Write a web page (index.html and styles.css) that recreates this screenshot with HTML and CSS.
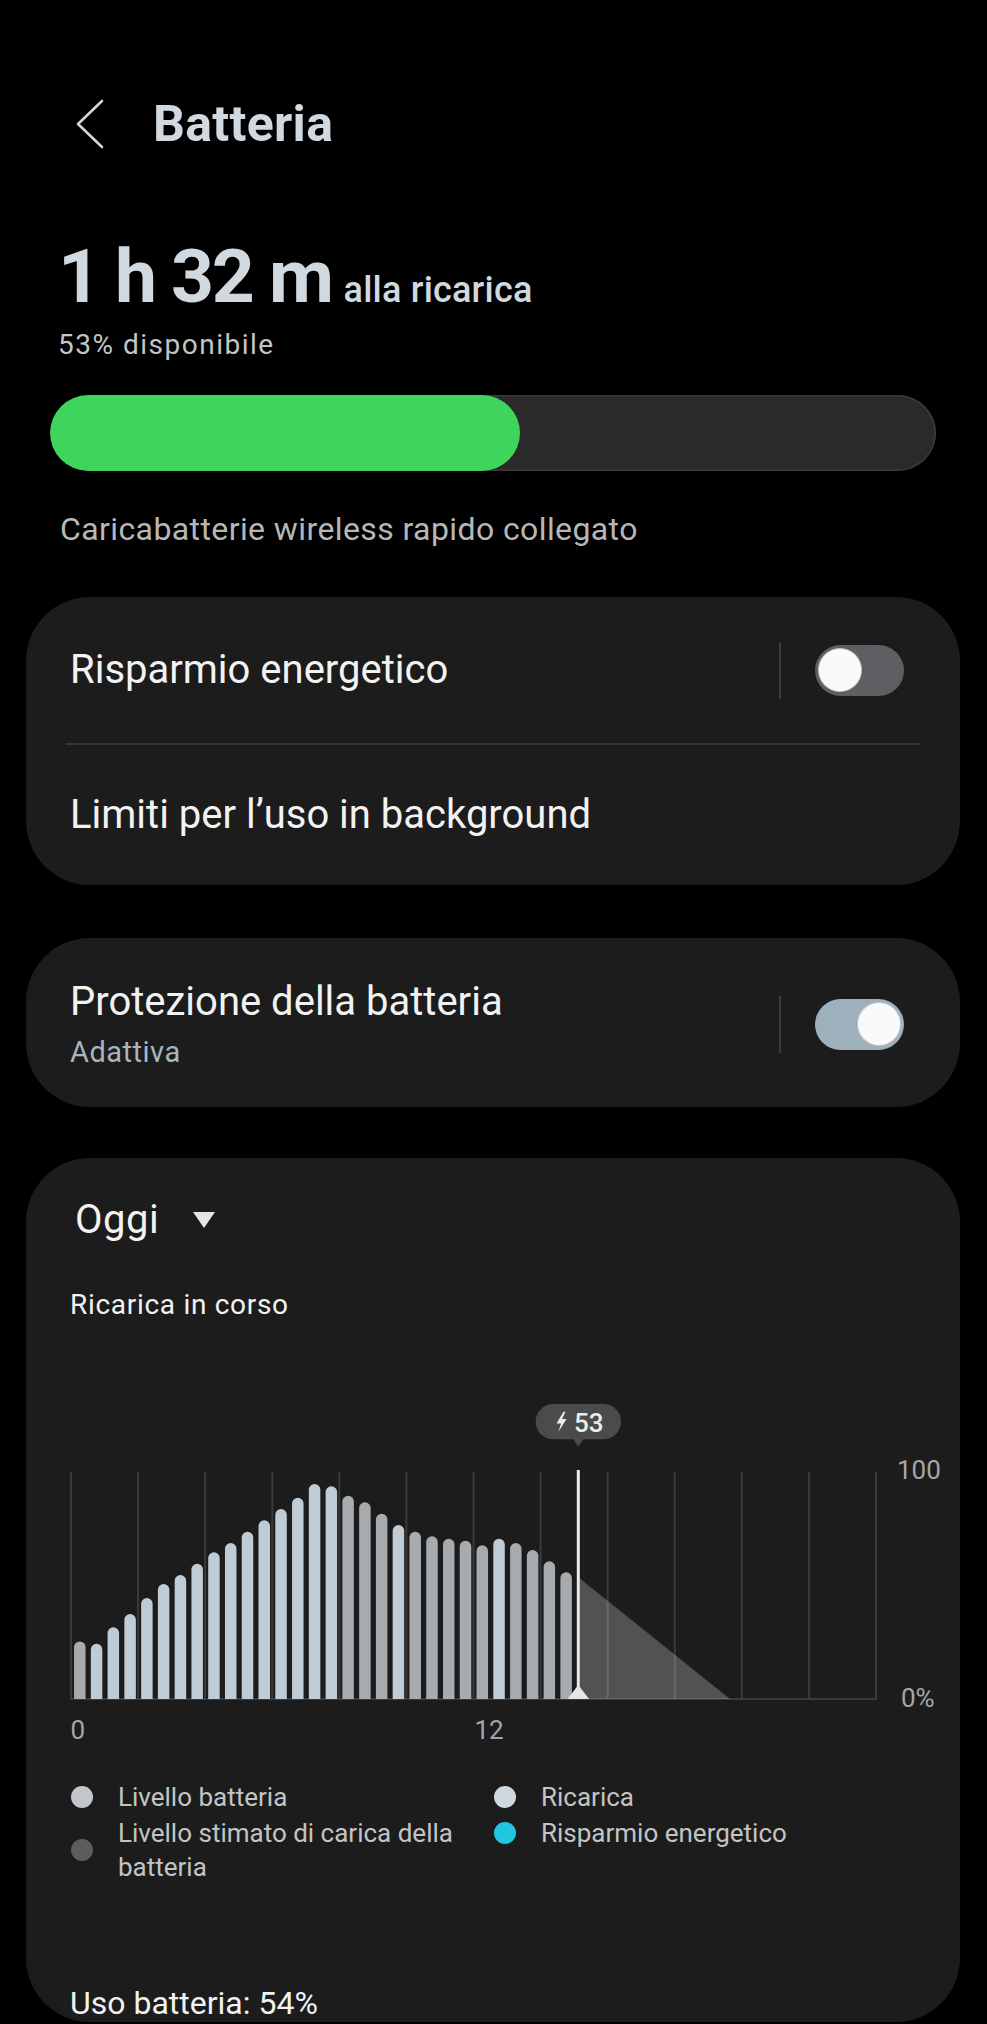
FILE: index.html
```html
<!DOCTYPE html>
<html lang="it">
<head>
  <meta charset="UTF-8">
  <meta name="viewport" content="width=device-width, initial-scale=1.0">
  <title>Batteria</title>
  <link rel="stylesheet" href="styles.css">
</head>
<body>
  <!-- Header -->
  <div class="topbar">
    <svg class="back" width="30" height="50" viewBox="0 0 30 50">
      <polyline points="27,2 3,25 27,48" fill="none" stroke="#d4d4d4" stroke-width="2.6" stroke-linecap="round" stroke-linejoin="round"/>
    </svg>
    <h1>Batteria</h1>
  </div>

  <!-- Summary -->
  <div class="summary">
    <div class="time"><span class="big">1 h 32 m</span><span class="suffix">alla ricarica</span></div>
    <div class="avail">53% disponibile</div>
  </div>
  <div class="level"><div class="level-fill" style="width: 53%"></div></div>
  <div class="charger">Caricabatterie wireless rapido collegato</div>

  <div class="cards">
    <!-- Power saving -->
    <div class="card card-list">
      <div class="row">
        <div class="row-title">Risparmio energetico</div>
        <span class="sep"></span>
        <span class="switch"></span>
      </div>
      <div class="divider"></div>
      <div class="row row-short">
        <div class="row-title">Limiti per l’uso in background</div>
      </div>
    </div>

    <!-- Protection -->
    <div class="card card-single">
      <div class="row-text">
        <div class="row-title">Protezione della batteria</div>
        <div class="row-sub">Adattiva</div>
      </div>
      <span class="sep"></span>
      <span class="switch on"></span>
    </div>

    <!-- Usage chart -->
    <div class="card card-chart">
      <div class="period">Oggi <span class="caret"></span></div>
      <div class="status">Ricarica in corso</div>

      <svg class="chart" width="880" height="345" viewBox="0 0 880 345">
        <defs>
          <clipPath id="plot"><rect x="0" y="0" width="880" height="299"/></clipPath>
        </defs>

        <!-- grid -->
        <g stroke="#3a3a3a" stroke-width="2">
          <line x1="1" y1="72" x2="1" y2="299"/>
          <line x1="68.08" y1="72" x2="68.08" y2="299"/>
          <line x1="135.17" y1="72" x2="135.17" y2="299"/>
          <line x1="202.25" y1="72" x2="202.25" y2="299"/>
          <line x1="269.33" y1="72" x2="269.33" y2="299"/>
          <line x1="336.42" y1="72" x2="336.42" y2="299"/>
          <line x1="403.5" y1="72" x2="403.5" y2="299"/>
          <line x1="470.58" y1="72" x2="470.58" y2="299"/>
          <line x1="537.67" y1="72" x2="537.67" y2="299"/>
          <line x1="604.75" y1="72" x2="604.75" y2="299"/>
          <line x1="671.83" y1="72" x2="671.83" y2="299"/>
          <line x1="738.92" y1="72" x2="738.92" y2="299"/>
          <line x1="806" y1="72" x2="806" y2="299"/>
          <line x1="0" y1="299" x2="807" y2="299"/>
        </g>

        <!-- bars, one per half hour -->
        <g clip-path="url(#plot)">
          <rect class="bar" x="4.05" y="241.4" width="11.5" height="66" rx="5.75"/>
          <rect class="bar charge" x="20.82" y="243.7" width="11.5" height="64" rx="5.75"/>
          <rect class="bar charge" x="37.59" y="227.3" width="11.5" height="80" rx="5.75"/>
          <rect class="bar charge" x="54.36" y="214" width="11.5" height="93" rx="5.75"/>
          <rect class="bar charge" x="71.13" y="198" width="11.5" height="109" rx="5.75"/>
          <rect class="bar charge" x="87.9" y="184" width="11.5" height="123" rx="5.75"/>
          <rect class="bar charge" x="104.67" y="175" width="11.5" height="132" rx="5.75"/>
          <rect class="bar charge" x="121.44" y="163.7" width="11.5" height="144" rx="5.75"/>
          <rect class="bar charge" x="138.21" y="152.3" width="11.5" height="155" rx="5.75"/>
          <rect class="bar charge" x="154.98" y="143" width="11.5" height="164" rx="5.75"/>
          <rect class="bar charge" x="171.75" y="131.7" width="11.5" height="176" rx="5.75"/>
          <rect class="bar charge" x="188.52" y="120.3" width="11.5" height="187" rx="5.75"/>
          <rect class="bar charge" x="205.29" y="109" width="11.5" height="198" rx="5.75"/>
          <rect class="bar charge" x="222.06" y="97.7" width="11.5" height="210" rx="5.75"/>
          <rect class="bar charge" x="238.83" y="84" width="11.5" height="223" rx="5.75"/>
          <rect class="bar charge" x="255.6" y="86.3" width="11.5" height="221" rx="5.75"/>
          <rect class="bar" x="272.37" y="95.7" width="11.5" height="212" rx="5.75"/>
          <rect class="bar" x="289.14" y="102.3" width="11.5" height="205" rx="5.75"/>
          <rect class="bar" x="305.91" y="113.7" width="11.5" height="194" rx="5.75"/>
          <rect class="bar charge" x="322.68" y="125" width="11.5" height="182" rx="5.75"/>
          <rect class="bar" x="339.45" y="131.7" width="11.5" height="176" rx="5.75"/>
          <rect class="bar" x="356.22" y="136.3" width="11.5" height="171" rx="5.75"/>
          <rect class="bar" x="372.99" y="138.7" width="11.5" height="169" rx="5.75"/>
          <rect class="bar" x="389.76" y="140.7" width="11.5" height="167" rx="5.75"/>
          <rect class="bar" x="406.53" y="145.3" width="11.5" height="162" rx="5.75"/>
          <rect class="bar charge" x="423.3" y="138.7" width="11.5" height="169" rx="5.75"/>
          <rect class="bar" x="440.07" y="143" width="11.5" height="164" rx="5.75"/>
          <rect class="bar" x="456.84" y="150" width="11.5" height="157" rx="5.75"/>
          <rect class="bar" x="473.61" y="161.3" width="11.5" height="146" rx="5.75"/>
          <rect class="bar" x="490.38" y="172.3" width="11.5" height="135" rx="5.75"/>
        </g>

        <!-- estimate -->
        <polygon points="509.8,178.4 660,299 509.8,299" fill="#ffffff" fill-opacity="0.24"/>

        <!-- now marker -->
        <line x1="508.3" y1="70" x2="508.3" y2="299" stroke="#ececec" stroke-width="3"/>
        <polygon points="497.5,299 519.1,299 508.3,285" fill="#e6e6e6"/>

        <!-- tooltip -->
        <rect x="465.7" y="4" width="85.3" height="35.3" rx="17.6" fill="#4b4b4b"/>
        <polygon points="503.3,39 513.3,39 508.3,46.7" fill="#4b4b4b"/>
        <polygon points="493.5,11.7 486.5,23.5 491,23.5 488.5,31.7 496.5,19 492,19 495.5,11.7" fill="#ececec"/>
        <text class="tip" x="504" y="31.7">53</text>

        <!-- axis labels -->
        <text class="axis" x="827" y="79.3">100</text>
        <text class="axis" x="831" y="306.7">0%</text>
        <text class="axis" x="0.5" y="339.3">0</text>
        <text class="axis" x="404.5" y="339.3">12</text>
      </svg>

      <!-- Legend -->
      <div class="legend">
        <div class="legend-item"><span class="dot dot-level"></span><span class="legend-text">Livello batteria</span></div>
        <div class="legend-item"><span class="dot dot-charge"></span><span class="legend-text">Ricarica</span></div>
        <div class="legend-item"><span class="dot dot-estimate"></span><span class="legend-text">Livello stimato di carica della batteria</span></div>
        <div class="legend-item"><span class="dot dot-saver"></span><span class="legend-text">Risparmio energetico</span></div>
      </div>

      <div class="usage">Uso batteria: 54%</div>
    </div>
  </div>
</body>
</html>
```

FILE: styles.css
```css
body {
  margin: 0;
  background-color: #000;
  font-family: Roboto, "Noto Sans", sans-serif;
  color: #f2f2f2;
}

/* Header */
.topbar {
  display: flex;
  align-items: center;
  height: 50px;
  padding: 99px 0 0 75px;
}

.topbar h1 {
  margin: 0 0 0 48px;
  font-size: 50px;
  line-height: 50px;
  font-weight: 700;
  letter-spacing: 0.3px;
  color: #d0d9df;
}

/* Summary */
.summary {
  padding-left: 58px;
}

.time {
  display: flex;
  align-items: baseline;
  height: 74px;
  margin-top: 90px;
  line-height: 74px;
  color: #d0d9df;
}

.big {
  font-size: 75px;
  font-weight: 700;
  letter-spacing: -2.3px;
}

.suffix {
  margin-left: 12px;
  font-size: 36px;
  line-height: 36px;
  font-weight: 500;
  letter-spacing: 0.2px;
}

.avail {
  margin-top: 15px;
  font-size: 28px;
  line-height: 34px;
  letter-spacing: 1.5px;
  color: #c4c4c4;
}

.level {
  height: 76px;
  margin: 33px 51px 0 50px;
  border-radius: 38px;
  background-color: #2a2a2a;
  box-shadow: inset 0 0 0 1.5px #3b3b3b;
  overflow: hidden;
}

.level-fill {
  height: 100%;
  border-radius: 38px;
  background-color: #3dd55c;
}

.charger {
  margin-top: 40px;
  padding-left: 60px;
  font-size: 32px;
  line-height: 36px;
  letter-spacing: 0.4px;
  color: #b7b7b7;
}

/* Cards */
.cards {
  padding: 0 27px 0 26px;
}

.card {
  background-color: #1c1c1c;
  border-radius: 64px;
}

.card-list {
  margin-top: 50px;
  padding: 0 56px 0 44px;
}

.row {
  display: flex;
  align-items: center;
  height: 146px;
}

.row-short {
  height: 140px;
}

.row-text {
  flex: 1;
}

.row-title {
  flex: 1;
  font-size: 40px;
  line-height: 46px;
}

.row-sub {
  margin-top: 10px;
  font-size: 29px;
  line-height: 34px;
  letter-spacing: 0.5px;
  color: #a9b5be;
}

.divider {
  height: 2px;
  margin: 0 -16px 0 -4px;
  background-color: #353535;
}

.sep {
  width: 2px;
  height: 57px;
  margin-right: 34px;
  background-color: #3d3d3d;
}

.switch {
  position: relative;
  width: 89px;
  height: 51px;
  border-radius: 26px;
  background-color: #5e5f63;
}

.switch::after {
  content: "";
  position: absolute;
  top: 4.5px;
  left: 4px;
  width: 42px;
  height: 42px;
  border-radius: 50%;
  background-color: #fafafa;
  box-shadow: 0 0 0 1px #c9c9c9;
}

.switch.on {
  background-color: #9db0bc;
}

.switch.on::after {
  left: 43px;
}

.card-single {
  display: flex;
  align-items: center;
  margin-top: 53px;
  padding: 41px 56px 38px 44px;
}

/* Chart card */
.card-chart {
  margin-top: 51px;
  padding: 40px 0 1px 44px;
}

.period {
  display: flex;
  align-items: center;
  margin-left: 5px;
  font-size: 40px;
  line-height: 44px;
  letter-spacing: 0.5px;
}

.caret {
  width: 0;
  height: 0;
  margin-left: 34px;
  border-left: 11px solid transparent;
  border-right: 11px solid transparent;
  border-top: 16px solid #e6e6e6;
}

.status {
  margin-top: 47px;
  font-size: 28px;
  line-height: 32px;
  letter-spacing: 0.7px;
}

.chart {
  display: block;
  margin-top: 79px;
  overflow: visible;
}

.bar {
  fill: #a7abae;
}

.bar.charge {
  fill: #bfccd5;
}

.tip {
  font-family: Roboto, sans-serif;
  font-size: 26px;
  font-weight: 500;
  fill: #ececec;
}

.axis {
  font-family: Roboto, sans-serif;
  font-size: 26px;
  fill: #a6a6a6;
}

.legend {
  display: grid;
  grid-template-columns: 423px 1fr;
  align-items: start;
  row-gap: 2px;
  margin-top: 35px;
  font-size: 26px;
  line-height: 34px;
  color: #c4c4c4;
}

.legend-item {
  display: flex;
  align-items: center;
}

.legend-text {
  max-width: 350px;
}

.dot {
  flex-shrink: 0;
  width: 22px;
  height: 22px;
  margin: 0 25px 0 1px;
  border-radius: 50%;
}

.dot-level {
  background-color: #c3c7cb;
}

.dot-charge {
  background-color: #d0d8de;
}

.dot-estimate {
  background-color: #5b5d5f;
}

.dot-saver {
  background-color: #22c6e3;
}

.usage {
  margin-top: 101px;
  font-size: 32px;
  line-height: 36px;
}
```
